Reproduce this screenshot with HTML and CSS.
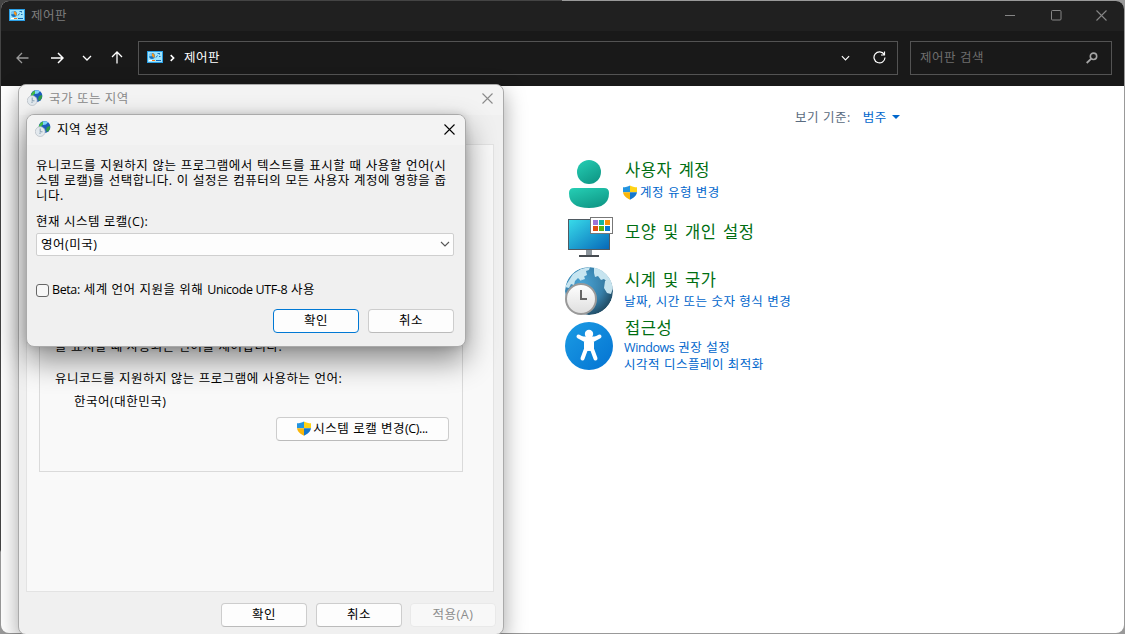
FILE: index.html
```html
<!DOCTYPE html>
<html lang="ko">
<head>
<meta charset="utf-8">
<title>제어판</title>
<link rel="stylesheet" href="styles.css">
</head>
<body>
<svg class="defs" width="0" height="0">
  <defs>
    <linearGradient id="teal" x1="0" y1="0" x2=".6" y2="1"><stop offset="0" stop-color="#26cfb5"/><stop offset="1" stop-color="#109a88"/></linearGradient>
    <linearGradient id="screen" x1="0" y1="0" x2="1" y2="1"><stop offset="0" stop-color="#38dcea"/><stop offset="1" stop-color="#0667b8"/></linearGradient>
    <radialGradient id="earth" cx=".35" cy=".35" r=".75"><stop offset="0" stop-color="#4ba5d6"/><stop offset=".6" stop-color="#377fa9"/><stop offset="1" stop-color="#1c4258"/></radialGradient>
    <linearGradient id="face" x1="0" y1="0" x2="0" y2="1"><stop offset="0" stop-color="#fff"/><stop offset="1" stop-color="#dedede"/></linearGradient>
    <linearGradient id="access" x1="0" y1="0" x2="1" y2="1"><stop offset="0" stop-color="#1b9ce4"/><stop offset="1" stop-color="#0473d2"/></linearGradient>
    <clipPath id="earthClip"><circle cx="24" cy="24" r="24"/></clipPath>
    <clipPath id="shieldClip"><path d="M7 0C5 1.600 2.600 2 0 2V6.500C0 10 3.500 13 7 14.500 10.500 13 14 10 14 6.500V2C11.400 2 9 1.600 7 0Z"/></clipPath>
    <symbol id="panel" viewBox="0 0 16 12">
      <rect width="16" height="12" fill="#2a9fe6"/><rect x="1" y="1" width="14" height="10" fill="#a0e4fc"/>
      <circle cx="5" cy="5" r="2.900" fill="#1671bd"/><path d="M4.800 5.200V1.800A3 3 0 0 0 1.800 5.200Z" fill="#7cc9f2"/><path d="M5 5V2.200A2.900 2.900 0 0 1 7 7z" fill="#f8971d"/>
      <path d="M9 6.500l1.500-2M10.500 2.500h1.500M12.500 2v1.500M12 5.500h1.500" stroke="#1265ad" stroke-width=".9"/>
      <path d="M2 9.500h3" stroke="#fff"/><path d="M5 9.500h3" stroke="#f57c13"/><path d="M9 9.500h5" stroke="#1565b2"/>
    </symbol>
    <symbol id="region" viewBox="0 0 16 16">
      <circle cx="9.500" cy="6" r="5.900" fill="#1c5cbc"/><path d="M4 4.500q1-3 4-4l0 3-2 2 1 2-3 1z" fill="#42bd45"/><path d="M12 6l3-1q.500 4-3 6l-1-2z" fill="#329c45"/><path d="M8 .500q3-.7 5 .800l-2 2.200-3 .5z" fill="#7fd3f6"/>
      <circle cx="5.200" cy="10.600" r="4.900" fill="#e3e9ee" stroke="#b4bcc3" stroke-width=".7"/><path d="M5.200 7.500v3.300h2.300M5 11.500v1.500" fill="none" stroke="#7f98ac" stroke-width=".9"/>
    </symbol>
    <symbol id="shield" viewBox="0 0 14 14.500"><g clip-path="url(#shieldClip)"><path fill="#2394df" d="M0 0h7v7H0z"/><path fill="#ffd316" d="M7 0h7v7H7z"/><path fill="#f9b60b" d="M0 7h7v8H0z"/><path fill="#1477ce" d="M7 7h7v8H7z"/></g></symbol>
    <symbol id="close" viewBox="0 0 11 11"><path d="M.5.5l10 10M10.500.5l-10 10" fill="none" stroke="currentColor" stroke-width="1.100"/></symbol>
    <symbol id="chevron" viewBox="0 0 10 6"><path d="M1 1l4 4 4-4" fill="none" stroke="currentColor" stroke-width="1.300"/></symbol>
  </defs>
</svg>
<div class="desktop">
  <main class="explorer">
    <header class="titlebar">
      <svg class="panel-icon"><use href="#panel"/></svg><span>제어판</span>
      <div class="captions">
        <svg width="11" height="11"><path d="M0 5.500h10" stroke="currentColor"/></svg>
        <svg width="11" height="11"><rect x=".5" y=".5" width="9.500" height="9.500" rx="1" fill="none" stroke="currentColor"/></svg>
        <svg width="11" height="11"><use href="#close"/></svg>
      </div>
    </header>
    <nav class="toolbar">
      <div class="arrows">
        <svg class="dim" width="13" height="12"><path d="M12.500 6H1M6 1L1 6l5 5" fill="none" stroke="currentColor" stroke-width="1.300"/></svg>
        <svg width="13" height="12"><path d="M0 6h12M7 1l5 5-5 5" fill="none" stroke="currentColor" stroke-width="1.500"/></svg>
        <svg width="10" height="6"><use href="#chevron"/></svg>
        <svg width="12" height="13"><path d="M6 12.500V1M1 6l5-5 5 5" fill="none" stroke="currentColor" stroke-width="1.300"/></svg>
      </div>
      <div class="address">
        <svg class="panel-icon"><use href="#panel"/></svg>
        <svg class="crumb" width="5" height="8"><path d="M.7 1.200L3.600 4 .7 6.800" fill="none" stroke="currentColor" stroke-width="1.600"/></svg>
        <span>제어판</span>
        <svg class="drop" width="9" height="6"><use href="#chevron"/></svg>
        <svg width="13" height="13"><path d="M11.200 3.500A5.500 5.500 0 1 0 12 6.500M11.500.5v3.500H8" fill="none" stroke="currentColor" stroke-width="1.200"/></svg>
      </div>
      <div class="search"><span>제어판 검색</span>
        <svg width="12" height="12"><circle cx="7.500" cy="4.300" r="3.200" fill="none" stroke="currentColor" stroke-width="1.600"/><path d="M5 6.800L.7 11" stroke="currentColor" stroke-width="1.800"/></svg>
      </div>
    </nav>
    <section class="content">
      <div class="viewby"><span>보기 기준:</span><a>범주</a><svg width="8" height="4"><path d="M0 0h8L4 4z" fill="#06c"/></svg></div>
      <div class="categories">
        <article class="category accounts">
          <svg width="48" height="48"><circle cx="24" cy="12" r="12" fill="url(#teal)"/><path d="M9 28h30q5 0 5 5 0 15-20 15T4 33q0-5 5-5" fill="url(#teal)"/></svg>
          <div><h2>사용자 계정</h2><a class="shielded"><svg width="14" height="15"><use href="#shield"/></svg>계정 유형 변경</a></div>
        </article>
        <article class="category looks">
          <svg width="48" height="40"><path d="M21 33h6v5h-6z" fill="#8d969d"/><path d="M14 38h20v2H14z" fill="#464b50"/><rect x="3.500" y="2.500" width="41" height="30" fill="url(#screen)" stroke="#4f5a62"/><rect x="25.500" y=".5" width="22" height="16" fill="#fff" stroke="#777"/><path fill="#9c72d8" d="M28 3h5v5h-5z"/><path fill="#13b5a0" d="M34 3h5v5h-5z"/><path fill="#f7900a" d="M40 3h5v5h-5z"/><path fill="#e04c12" d="M28 9h5v5h-5z"/><path fill="#58b515" d="M34 9h5v5h-5z"/><path fill="#0878d3" d="M40 9h5v5h-5z"/></svg>
          <div><h2>모양 및 개인 설정</h2></div>
        </article>
        <article class="category clock">
          <svg width="48" height="48"><g clip-path="url(#earthClip)"><circle cx="24" cy="24" r="24" fill="url(#earth)"/><path d="M3 15l5-8 8-5 9-2-1 3-3 1 1 4-4 2-2 4-3-3-3 3-1 4-3-1-2 4-4-1zM15 8l4 1 1 3-3 1zM29 0l6 1 8 6 3 6-4 2-3-3-3 1-3-4-3 1-1-4zM40 14l6-1 2 8-2 6-4-1-3-5z" fill="#cfeaf3" opacity=".95"/></g><circle cx="16" cy="32" r="15" fill="url(#face)" stroke="#999" stroke-width="2"/><path d="M16 23v9h6" fill="none" stroke="#666" stroke-width="2"/></svg>
          <div><h2>시계 및 국가</h2><a>날짜, 시간 또는 숫자 형식 변경</a></div>
        </article>
        <article class="category access">
          <svg width="48" height="48"><circle cx="24" cy="24" r="24" fill="url(#access)"/><circle cx="24" cy="12" r="4.200" fill="#fff"/><path d="M13.500 14.500L21 18.500h6l7.500-4M21 19h6v8h-6zM21 19v8l-3.500 9.500M27 19v8l3.500 9.500" fill="#fff" stroke="#fff" stroke-width="4" stroke-linecap="round" stroke-linejoin="round"/><path d="M24 28.500l-3 9h6z" fill="#0e87da"/></svg>
          <div><h2>접근성</h2><a><span class="latin">Windows</span> 권장 설정</a><a>시각적 디스플레이 최적화</a></div>
        </article>
      </div>
    </section>
  </main>

  <section class="dialog region">
    <header class="caption muted"><svg width="16" height="16"><use href="#region"/></svg><span>국가 또는 지역</span><svg class="x" width="11" height="11"><use href="#close"/></svg></header>
    <div class="tabpage">
      <div class="group">
        <p>을 표시할 때 사용되는 언어를 제어합니다.</p>
        <p class="label">유니코드를 지원하지 않는 프로그램에 사용하는 언어:</p>
        <p class="value">한국어(대한민국)</p>
        <button class="change"><svg width="14" height="15"><use href="#shield"/></svg><span>시스템 로캘 변경<span class="latin">(C)...</span></span></button>
      </div>
    </div>
    <footer class="actions"><button>확인</button><button>취소</button><button class="disabled">적용(A)</button></footer>
  </section>

  <section class="dialog locale">
    <header class="caption"><svg width="16" height="16"><use href="#region"/></svg><span>지역 설정</span><svg class="x" width="11" height="11"><use href="#close"/></svg></header>
    <div class="form">
      <p class="intro">유니코드를 지원하지 않는 프로그램에서 텍스트를 표시할 때 사용할 언어(시<br>스템 로캘)를 선택합니다. 이 설정은 컴퓨터의 모든 사용자 계정에 영향을 줍<br>니다.</p>
      <p class="field">현재 시스템 로캘(C):</p>
      <div class="select"><span>영어(미국)</span><svg width="10" height="6"><path d="M1 1l4 4 4-4" fill="none" stroke="#555" stroke-width="1.100"/></svg></div>
      <div class="check"><i></i><span><span class="latin">Beta:</span> 세계 언어 지원을 위해 <span class="latin">Unicode UTF-8</span> 사용</span></div>
      <footer class="buttons"><button class="default">확인</button><button>취소</button></footer>
    </div>
  </section>
</div>
</body>
</html>
```
FILE: styles.css
```css
* { box-sizing: border-box; }
body { margin: 0; font: 12.5px/17px "Open Sans", "Noto Sans CJK KR", sans-serif; letter-spacing: .5px; word-spacing: .15px; color: #000; }
p, h2 { margin: 0; white-space: nowrap; }
svg { display: block; flex: none; }
.defs { position: absolute; }
.latin { letter-spacing: -.4px; }

.desktop { position: relative; width: 1125px; height: 634px; padding: 1px; overflow: hidden; background: linear-gradient(90deg, transparent 50%, #999 50%), linear-gradient(#444 0 550px, #999 552px); }
.explorer { width: 1123px; height: 632px; border-radius: 8px; overflow: hidden; background: #fff; display: flex; flex-direction: column; }
.titlebar { height: 30px; flex: none; background: #202020; color: #7d7d7d; display: flex; align-items: center; padding: 0 17px 2px 8px; gap: 6px; }
.panel-icon { width: 16px; height: 12px; }
.captions { margin-left: auto; display: flex; gap: 34.5px; color: #858585; }
.toolbar { height: 55px; flex: none; background: #191919; color: #fff; display: flex; align-items: center; padding: 0 12px 2px 15px; }
.arrows { display: flex; align-items: center; width: 122px; }
.arrows svg:nth-child(2) { margin-left: 22px; }
.arrows svg:nth-child(3) { margin-left: 18px; }
.arrows svg:nth-child(4) { margin-left: 19px; }
.dim { color: #999; }
.address { width: 760px; height: 34px; border: 1px solid #535353; display: flex; align-items: center; padding: 0 11px 0 8px; }
.address .panel-icon { margin-bottom: 2px; }
.crumb { margin: 1px 9px 0 7px; }
.drop { margin: 0 23px 0 auto; }
.search { margin-left: 12px; width: 202px; height: 34px; border: 1px solid #535353; display: flex; align-items: center; justify-content: space-between; padding: 0 13px 0 9px; color: #6f6f6f; }
.search svg { color: #a5a5a5; }

.content { flex: 1; }
.content a { display: block; color: #06c; white-space: nowrap; }
.viewby { display: flex; align-items: center; padding: 23px 0 0 794px; color: #5a6b80; }
.viewby a { margin: 0 5px 0 12px; }
.viewby svg { margin-top: -1px; }
.categories { padding: 34px 0 0 564px; }
.category { display: flex; gap: 12px; }
.category h2 { font-size: 16.5px; line-height: 20px; font-weight: 400; letter-spacing: .55px; word-spacing: 1.6px; color: #006e12; }
.category a { margin-left: -1px; }
.accounts { height: 57px; }
.accounts a { margin: 4px 0 0 -2px; }
.shielded { display: flex !important; gap: 3px; align-items: center; }
.looks { height: 50px; }
.looks h2 { margin-top: 5px; }
.clock { height: 51px; }
.clock h2 { margin: 3px 0; }
.access > svg { margin-top: 4px; }
.access h2 { margin-bottom: 1px; }

.dialog { position: absolute; border: 1px solid #aaa; border-radius: 8px; background: #f0f0f0; }
.region { left: 18px; top: 84px; width: 486px; height: 551px; box-shadow: 0 8px 22px rgba(0,0,0,.36); overflow: hidden; }
.locale { left: 26px; top: 114px; width: 440px; height: 233px; box-shadow: 0 14px 30px rgba(0,0,0,.44), 0 0 8px rgba(0,0,0,.15); }
.caption { height: 30px; display: flex; align-items: center; gap: 6px; padding: 0 10px 2px 8px; background: #f3f3f3; border-radius: 7px 7px 0 0; }
.caption .x { margin-left: auto; }
.region .caption { padding: 0 10px 4px 8px; }
.muted { color: #8a8a8a; }
.tabpage { margin: 29px 0 0 7px; width: 468px; height: 448px; border: 1px solid #e3e3e3; background: #f9f9f9; }
.group { margin-left: 12px; width: 424px; height: 327px; border: 1px solid #dadada; border-top: 0; padding: 193px 13px 0 15px; display: flex; flex-direction: column; }
.label { margin-top: 15px; }
.value { margin: 6px 0 7px 19px; }
button { width: 86px; height: 24px; padding: 0 0 2px; border: 1px solid #cdcdcd; border-bottom-color: #bbb; border-radius: 4px; background: #fdfdfd; font: inherit; letter-spacing: inherit; word-spacing: inherit; color: #000; display: flex; align-items: center; justify-content: center; white-space: nowrap; }
.change { width: 173px; align-self: flex-end; gap: 2px; }
.actions { display: flex; gap: 9px; padding: 11px 0 0 202px; }
.disabled { margin-left: -1px; color: #8c8c8c; background: #f8f8f8; border-color: #e9e9e9; }
.form { padding: 13px 11px 0 9px; }
.intro { line-height: 15px; word-spacing: .5px; }
.field { margin-top: 10px; }
.select { height: 23px; margin-top: 3px; width: 418px; border: 1px solid #cfcfcf; border-radius: 2px; background: #fdfdfd; display: flex; align-items: center; justify-content: space-between; padding: 0 3px 1px 4px; }
.check { display: flex; align-items: center; gap: 3px; margin-top: 25px; height: 17px; white-space: nowrap; }
.check i { width: 13px; height: 13px; border: 1px solid #666; border-radius: 3px; background: #f7f7f7; margin-top: 1px; }
.buttons { display: flex; justify-content: flex-end; gap: 9px; margin-top: 11px; }
.default { border-color: #0078d4; }
```
